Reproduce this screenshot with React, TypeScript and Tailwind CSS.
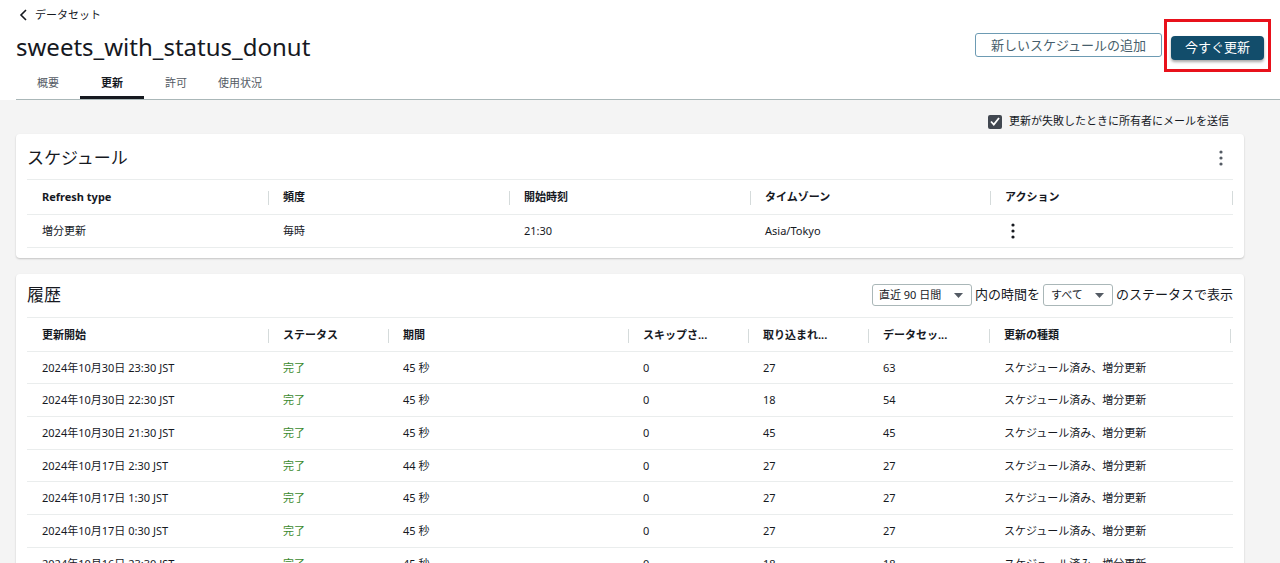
import React from 'react';

const font = { fontFamily: '"Noto Sans", "Noto Sans CJK JP", sans-serif' };

function Sep() {
  return <span className="absolute left-0 top-1/2 h-[14px] w-px -translate-y-1/2 bg-[#d5dbdb]" />;
}

function Kebab({ className = '' }: { className?: string }) {
  return (
    <svg width="4" height="16" viewBox="0 0 4 16" className={className}>
      <circle cx="2" cy="2" r="1.6" fill="currentColor" />
      <circle cx="2" cy="8" r="1.6" fill="currentColor" />
      <circle cx="2" cy="14" r="1.6" fill="currentColor" />
    </svg>
  );
}

function Caret() {
  return (
    <svg width="9" height="5" viewBox="0 0 9 5" className="text-[#545b64]">
      <path d="M0 0h9L4.5 5z" fill="currentColor" />
    </svg>
  );
}

const scheduleCols = [241, 241, 241, 240, 242];
const historyCols = [241, 120, 240, 120, 120, 121, 241];

const history = [
  ['2024年10月30日 23:30 JST', '完了', '45 秒', '0', '27', '63', 'スケジュール済み、増分更新'],
  ['2024年10月30日 22:30 JST', '完了', '45 秒', '0', '18', '54', 'スケジュール済み、増分更新'],
  ['2024年10月30日 21:30 JST', '完了', '45 秒', '0', '45', '45', 'スケジュール済み、増分更新'],
  ['2024年10月17日 2:30 JST', '完了', '44 秒', '0', '27', '27', 'スケジュール済み、増分更新'],
  ['2024年10月17日 1:30 JST', '完了', '45 秒', '0', '27', '27', 'スケジュール済み、増分更新'],
  ['2024年10月17日 0:30 JST', '完了', '45 秒', '0', '27', '27', 'スケジュール済み、増分更新'],
  ['2024年10月16日 23:30 JST', '完了', '45 秒', '0', '18', '18', 'スケジュール済み、増分更新'],
];

export default function App() {
  return (
    <div className="h-[563px] w-[1280px] overflow-hidden bg-[#f4f4f4] text-[#16191f]" style={font}>
      {/* Header */}
      <div className="bg-white">
        <div className="flex items-start justify-between">
          <div className="pl-4">
            <div className="flex h-[30px] items-center gap-[6px] pl-[3px] text-[11px] text-[#16191f]">
              <svg width="10" height="12" viewBox="0 0 10 12">
                <path d="M7 1L2 6l5 5" fill="none" stroke="#16191f" strokeWidth="1.6" />
              </svg>
              <span>データセット</span>
            </div>
            <h1 className="h-[34px] text-[24px] leading-[34px] text-[#16191f]">sweets_with_status_donut</h1>
          </div>
          <div className="mr-[9px] mt-[19px] flex items-center">
            <button className="mr-[2px] h-[24px] rounded-[3px] border border-[#6d9bb3] bg-white px-[15px] text-[13px] leading-none text-[#475e6c]">
              新しいスケジュールの追加
            </button>
            <div className="border-[3px] border-[#e8111b] px-[4px] pb-[9px] pt-[12px]">
              <button className="h-[24px] rounded-[4px] bg-[#124d6b] px-[14px] text-[13px] leading-none text-white shadow-[0_2px_3px_rgba(0,0,0,0.35)]">
                今すぐ更新
              </button>
            </div>
          </div>
        </div>
        <div className="ml-4 mt-[-3px] flex border-b border-[#aab7b8] text-[11px]">
          <div className="flex h-[30px] w-[64px] items-center justify-center text-[#545b64]">概要</div>
          <div className="flex h-[30px] w-[64px] items-center justify-center border-b-[3px] border-[#16191f] pt-[3px] font-bold">更新</div>
          <div className="flex h-[30px] w-[64px] items-center justify-center text-[#545b64]">許可</div>
          <div className="flex h-[30px] w-[64px] items-center justify-center text-[#545b64]">使用状況</div>
        </div>
      </div>

      {/* Body */}
      <div className="w-[1244px] pl-4">
        <div className="flex h-[34px] items-center justify-end gap-[7px] pr-[15px] pt-[10px] text-[11px]">
          <span className="flex h-[14px] w-[14px] items-center justify-center rounded-[2px] bg-[#414750]">
            <svg width="10" height="9" viewBox="0 0 10 9">
              <path d="M1 4.5l2.8 3L9 1" fill="none" stroke="white" strokeWidth="1.8" />
            </svg>
          </span>
          <span>更新が失敗したときに所有者にメールを送信</span>
        </div>

        {/* Schedule card */}
        <div className="rounded-[4px] bg-white px-[11px] pb-[10px] shadow-[0_1px_2px_rgba(0,0,0,0.2)]">
          <div className="flex h-[46px] items-center justify-between border-b border-[#eaeded] pt-[3px]">
            <h2 className="text-[17px]">スケジュール</h2>
            <Kebab className="mr-[10px] text-[#545b64]" />
          </div>
          <div className="flex h-[35px] border-b border-[#eaeded] pt-[2px] text-[11px] font-bold">
            {['Refresh type', '頻度', '開始時刻', 'タイムゾーン', 'アクション'].map((h, i) => (
              <div key={h} className="relative flex items-center pl-[15px]" style={{ width: scheduleCols[i] }}>
                {i > 0 && <Sep />}
                {h}
              </div>
            ))}
            <div className="relative w-px"><Sep /></div>
          </div>
          <div className="flex h-[33px] border-b border-[#eaeded] pt-[1px] text-[11px]">
            {['増分更新', '毎時', '21:30', 'Asia/Tokyo'].map((v, i) => (
              <div key={v} className="flex items-center pl-[15px]" style={{ width: scheduleCols[i] }}>
                {v}
              </div>
            ))}
            <div className="flex items-center pl-[21px]">
              <Kebab />
            </div>
          </div>
        </div>

        {/* History card */}
        <div className="mt-4 rounded-[4px] bg-white px-[11px] shadow-[0_1px_2px_rgba(0,0,0,0.2)]">
          <div className="flex h-[44px] items-center justify-between border-b border-[#eaeded]">
            <h2 className="text-[17px]">履歴</h2>
            <div className="flex items-center text-[13px]">
              <div className="flex h-[22px] w-[100px] items-center justify-between rounded-[3px] border border-[#aab7b8] pl-[6px] pr-[8px] text-[11px]">
                <span>直近 90 日間</span>
                <Caret />
              </div>
              <span className="px-[3px]">内の時間を</span>
              <div className="flex h-[22px] w-[70px] items-center justify-between rounded-[3px] border border-[#aab7b8] pl-[7px] pr-[8px] text-[11px]">
                <span>すべて</span>
                <Caret />
              </div>
              <span className="pl-[3px]">のステータスで表示</span>
            </div>
          </div>
          <div className="flex h-[34px] border-b border-[#eaeded] pt-[3px] text-[11px] font-bold">
            {['更新開始', 'ステータス', '期間', 'スキップさ...', '取り込まれ...', 'データセッ...', '更新の種類'].map((h, i) => (
              <div key={h} className="relative flex items-center pl-[15px]" style={{ width: historyCols[i] }}>
                {i > 0 && <Sep />}
                {h}
              </div>
            ))}
            <div className="relative w-px"><Sep /></div>
          </div>
          {history.map((row, r) => (
            <div key={r} className="flex h-[32.7px] border-b border-[#eaeded] pt-[1px] text-[11px]">
              {row.map((v, i) => (
                <div
                  key={i}
                  className={`flex items-center pl-[15px] ${i === 1 ? 'text-[#3b8a2f]' : ''}`}
                  style={{ width: historyCols[i] }}
                >
                  {v}
                </div>
              ))}
            </div>
          ))}
        </div>
      </div>
    </div>
  );
}
